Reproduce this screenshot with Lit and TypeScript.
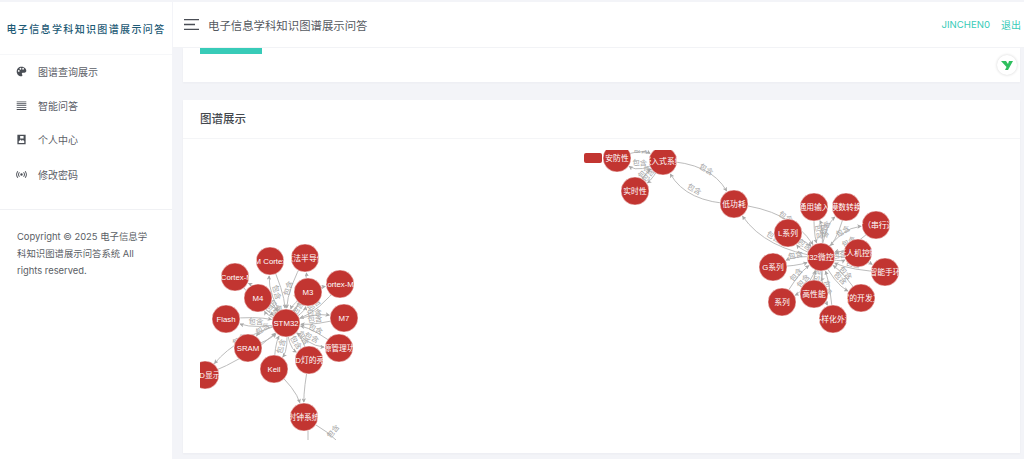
import { LitElement, html, css, svg } from "lit";
import { customElement } from "lit/decorators.js";

type N = { id: string; x: number; y: number; t: string; dx?: number };
type E = { a: string; b: string; c: number; l?: boolean };

const OX = 200, OY = 150;
const nodes: N[] = [
  { id: "stm", x: 286, y: 323, t: "STM32" },
  { id: "cortex", x: 270, y: 261, t: "ARM Cortex", dx: -5 },
  { id: "semi", x: 305, y: 258, t: "意法半导体" },
  { id: "cm0", x: 235, y: 277, t: "Cortex-M0", dx: 4 },
  { id: "m4", x: 258, y: 298, t: "M4" },
  { id: "m3", x: 308, y: 292, t: "M3" },
  { id: "cm3", x: 340, y: 284, t: "Cortex-M3" },
  { id: "flash", x: 226, y: 319, t: "Flash" },
  { id: "m7", x: 344, y: 318, t: "M7" },
  { id: "sram", x: 248, y: 348, t: "SRAM" },
  { id: "pwr", x: 339, y: 348, t: "电源管理功能" },
  { id: "keil", x: 274, y: 369, t: "Keil" },
  { id: "led", x: 309, y: 360, t: "LED灯的亮度" },
  { id: "lcd", x: 205, y: 375, t: "LCD显示" },
  { id: "clk", x: 304, y: 417, t: "时钟系统" },
  { id: "sec", x: 617, y: 158, t: "安防性" },
  { id: "emb", x: 663, y: 161, t: "嵌入式系统" },
  { id: "rt", x: 635, y: 191, t: "实时性" },
  { id: "low", x: 734, y: 204, t: "低功耗" },
  { id: "l", x: 788, y: 233, t: "L系列" },
  { id: "gpio", x: 814, y: 207, t: "通用输入" },
  { id: "adc", x: 846, y: 207, t: "模数转换" },
  { id: "uart", x: 876, y: 225, t: "UART（串行通信）" },
  { id: "hmi", x: 858, y: 253, t: "无人机控制" },
  { id: "mcu", x: 821, y: 257, t: "STM32微控制器" },
  { id: "watch", x: 885, y: 272, t: "智能手环" },
  { id: "g", x: 773, y: 267, t: "G系列" },
  { id: "f", x: 782, y: 302, t: "系列" },
  { id: "hp", x: 814, y: 294, t: "高性能" },
  { id: "dev", x: 861, y: 298, t: "丰富的开发工具" },
  { id: "per", x: 833, y: 319, t: "多样化外设" },
];

const fan = (hub: string, list: [string, number][]): E[] =>
  list.flatMap(([b, c], i) => [
    { a: hub, b, c, l: true },
    { a: b, b: hub, c: c * 0.6, l: i % 2 === 1 },
  ]);

const edges: E[] = [
  ...fan("stm", [["cortex", 0.16], ["semi", -0.2], ["cm0", -0.15], ["m4", 0.2], ["m3", -0.25], ["cm3", 0.25], ["flash", 0.14], ["m7", 0.14], ["sram", -0.2], ["pwr", -0.2], ["keil", 0.2], ["led", -0.25], ["lcd", -0.16]]),
  { a: "keil", b: "clk", c: 0.14 },
  { a: "led", b: "clk", c: -0.05 },
  { a: "emb", b: "sec", c: 0.3, l: true },
  { a: "sec", b: "emb", c: 0.25, l: true },
  { a: "emb", b: "rt", c: 0.12, l: true },
  { a: "rt", b: "emb", c: 0.12, l: true },
  { a: "emb", b: "low", c: 0.28, l: true },
  { a: "low", b: "emb", c: 0.28, l: true },
  { a: "mcu", b: "low", c: 0.22, l: true },
  { a: "low", b: "mcu", c: 0.24, l: true },
  ...fan("mcu", [["l", 0.16], ["gpio", -0.14], ["adc", 0.2], ["uart", 0.24], ["hmi", -0.2], ["watch", 0.16], ["g", -0.14], ["f", 0.2], ["hp", 0.16], ["dev", -0.16], ["per", -0.1]]),
];

const byId = new Map(nodes.map((n) => [n.id, n]));
const R = 14;

function edge(e: E) {
  const a = byId.get(e.a)!, b = byId.get(e.b)!;
  const ax = a.x - OX, ay = a.y - OY, bx = b.x - OX, by = b.y - OY;
  const dx = bx - ax, dy = by - ay;
  const cx = (ax + bx) / 2 + dy * e.c, cy = (ay + by) / 2 - dx * e.c;
  const d1 = Math.hypot(bx - cx, by - cy) || 1;
  const ex = bx - ((bx - cx) / d1) * (R + 1), ey = by - ((by - cy) / d1) * (R + 1);
  const mx = 0.25 * ax + 0.5 * cx + 0.25 * bx, my = 0.25 * ay + 0.5 * cy + 0.25 * by;
  let ang = (Math.atan2(dy, dx) * 180) / Math.PI;
  if (ang > 90) ang -= 180;
  if (ang < -90) ang += 180;
  return svg`<path class="edge" d="M${ax} ${ay}Q${cx} ${cy} ${ex} ${ey}" marker-end="url(#arrow)"></path>
    ${e.l ? svg`<text class="elabel" transform="translate(${mx} ${my}) rotate(${ang})" text-anchor="middle" y="-1">包含</text>` : ""}`;
}

function node(n: N, i: number) {
  const x = n.x - OX, y = n.y - OY;
  return svg`<clipPath id="c${i}"><circle cx=${x} cy=${y} r=${R}></circle></clipPath>
    <circle class="node" cx=${x} cy=${y} r=${R}></circle>
    <g clip-path="url(#c${i})"><text class="nlabel" x=${x + (n.dx ?? 0)} y=${y + 3} text-anchor="middle">${n.t}</text></g>`;
}

@customElement("app-root")
export class AppRoot extends LitElement {
  static styles = css`
    :host {
      display: block;
      width: 1024px;
      height: 459px;
      overflow: hidden;
      background: #f3f4f8;
      font-family: "Inter", "Liberation Sans", "Noto Sans CJK SC", sans-serif;
      color: #4b4f56;
    }
    .shell { display: grid; grid-template-columns: 172px 1fr; height: 457px; margin-top: 2px; }
    .side { background: #fff; display: flex; flex-direction: column; min-width: 0; }
    .brand {
      height: 53px; box-sizing: border-box; border-bottom: 1px solid #f6f7f9;
      display: flex; align-items: center; justify-content: center;
      font: 500 10px "Noto Sans CJK SC", sans-serif; letter-spacing: 1.36px; color: #1d5a75; white-space: nowrap;
    }
    .menu { display: flex; flex-direction: column; padding-top: 0; height: 155px; box-sizing: border-box; border-bottom: 1px solid #f0f1f4; }
    .item { height: 34.3px; display: flex; align-items: center; gap: 11px; padding-left: 16px; padding-bottom: 2px; box-sizing: border-box; font: 10px "Noto Sans CJK SC", sans-serif; color: #5c6067; }
    .item svg { width: 11px; height: 11px; flex: none; fill: #4a4e55; }
    .copy { padding: 18px 22px 0 17px; font: 9.4px/17px "Inter", "Noto Sans CJK SC", sans-serif; color: #5a5e65; }
    .main { display: flex; flex-direction: column; min-width: 0; padding-left: 1px; }
    .top {
      height: 46px; background: #fff; border-bottom: 1px solid #f2f3f6; box-sizing: border-box; flex: none;
      display: flex; align-items: center; padding: 0 3px 0 11px; gap: 8px;
    }
    .burger { width: 16px; height: 11px; flex: none; }
    .title { font: 11.4px "Noto Sans CJK SC", sans-serif; color: #55595f; flex: 1; }
    .user { font: 9.6px "Inter", "Noto Sans CJK SC", sans-serif; color: #38cbb8; margin-right: 3px; }
    .out { font: 10px "Noto Sans CJK SC", sans-serif; color: #38cbb8; }
    .content { flex: 1; padding: 0 4px 6px 10px; display: flex; flex-direction: column; gap: 18px; min-height: 0; }
    .card { background: #fff; box-shadow: 0 1px 2px rgba(40, 50, 70, 0.04); }
    .first { height: 34px; box-sizing: border-box; padding-left: 17px; position: relative; flex: none; }
    .tealbar { width: 62px; height: 6px; background: #38cbb8; }
    .logo {
      position: absolute; right: 3px; top: 7px; width: 20px; height: 20px; border-radius: 50%;
      background: #fff; box-shadow: 0 0 3px rgba(0, 0, 0, 0.18); display: flex; align-items: center; justify-content: center;
    }
    .logo svg { width: 12px; height: 10px; }
    .second { flex: 1; display: flex; flex-direction: column; min-height: 0; }
    .head { height: 39px; box-sizing: border-box; border-bottom: 1px solid #f4f5f7; padding: 0 0 2px 17px; display: flex; align-items: center; font: 500 11.5px "Noto Sans CJK SC", sans-serif; color: #43474d; flex: none; }
    .canvas { height: 290px; margin: 11px 0 0 17px; width: 800px; flex: none; position: relative; overflow: hidden; }
    .canvas svg { display: block; width: 800px; height: 290px; }
    .edge { fill: none; stroke: #b4b4b4; stroke-width: 0.9; }
    .elabel { font: 7.5px "Noto Sans CJK SC", sans-serif; fill: #a2a2a2; }
    .node { fill: #c23531; stroke: #fff; stroke-width: 0.5; }
    .nlabel { font: 7.8px "Liberation Sans", "Noto Sans CJK SC", sans-serif; fill: #fff; }
    .tip { fill: #c23531; }
  `;

  render() {
    return html`<div class="shell">
      <aside class="side">
        <div class="brand">电子信息学科知识图谱展示问答</div>
        <nav class="menu">
          <div class="item">
            <svg viewBox="0 0 16 16"><path d="M8 1C3.800 1 1 4 1 8c0 3.800 3 7 6.600 7 1.200 0 1.700-.8 1.700-1.600 0-1-.8-1.300-.8-2.200 0-.9.7-1.400 1.600-1.400h2C14 9.800 15 8.600 15 7c0-3.400-3.200-6-7-6zM4 8.500A1.300 1.300 0 1 1 4 5.900A1.300 1.300 0 0 1 4 8.500zM6.500 5.300A1.300 1.300 0 1 1 6.500 2.700A1.300 1.300 0 0 1 6.500 5.300zM10.300 5.300A1.300 1.300 0 1 1 10.300 2.700A1.300 1.300 0 0 1 10.300 5.300z" fill-rule="evenodd"></path></svg>
            图谱查询展示
          </div>
          <div class="item">
            <svg viewBox="0 0 16 16"><path d="M1 2h14v1.300H1zM1 4.800h14v1.300H1zM1 7.600h14v1.300H1zM1 10.400h14v1.300H1zM1 13.200h14v1.300H1z"></path></svg>
            智能问答
          </div>
          <div class="item">
            <svg viewBox="0 0 16 16"><path d="M2 1h12v14H2zM4 13h8v-2.500L10 8.500 8.500 10 7 8l-3 2.500zM6 3v3.500h5V3z" fill-rule="evenodd"></path></svg>
            个人中心
          </div>
          <div class="item">
            <svg viewBox="0 0 16 16"><circle cx="8" cy="8" r="1.700"></circle><path d="M4.500 4.300 5.500 5.200C4 6.800 4 9.200 5.500 10.800L4.500 11.700C2.500 9.600 2.500 6.400 4.500 4.300zM11.500 4.300C13.500 6.400 13.500 9.600 11.500 11.700L10.500 10.800C12 9.200 12 6.800 10.500 5.200zM2.300 2.800 3.200 3.700C1 6.100 1 9.900 3.200 12.300L2.300 13.200C-.4 10.300-.4 5.700 2.300 2.800zM13.700 2.800C16.400 5.700 16.400 10.300 13.700 13.200L12.800 12.300C15 9.900 15 6.100 12.800 3.700z"></path></svg>
            修改密码
          </div>
        </nav>
        <div class="copy">Copyright © 2025 电子信息学科知识图谱展示问答系统 All rights reserved.</div>
      </aside>
      <div class="main">
        <header class="top">
          <svg class="burger" viewBox="0 0 16 11"><path d="M0 .7h15M0 5.500h11M0 10.300h15" stroke="#4a4e55" stroke-width="1.300" fill="none"></path></svg>
          <div class="title">电子信息学科知识图谱展示问答</div>
          <span class="user">JINCHEN0</span><span class="out">退出</span>
        </header>
        <div class="content">
          <section class="card first">
            <div class="tealbar"></div>
            <div class="logo"><svg viewBox="0 0 12 10"><path d="M0 1h5l2 3 1-3h4L7 10H4l1.500-3z" fill="#2fbf5f"></path></svg></div>
          </section>
          <section class="card second">
            <div class="head">图谱展示</div>
            <div class="canvas">
              <svg viewBox="0 0 800 290">
                <defs><marker id="arrow" viewBox="0 0 6 6" refX="5" refY="3" markerWidth="5" markerHeight="5" orient="auto"><path d="M0 0 6 3 0 6 1.500 3z" fill="#a8a8a8"></path></marker></defs>
                ${edges.map(edge)}
                <path class="edge" d="M108 281 108 290M116 275Q128 282 136 290"></path>
                <text class="elabel" transform="translate(135 283) rotate(-50)" text-anchor="middle">包含</text>
                ${nodes.map(node)}
                <rect class="tip" x="384" y="3" width="18" height="10" rx="2"></rect>
              </svg>
            </div>
          </section>
        </div>
      </div>
    </div>`;
  }
}
